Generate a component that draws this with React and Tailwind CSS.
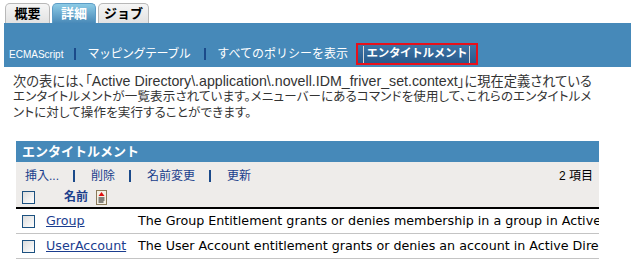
import React from 'react';

const FONT = '"Liberation Sans", "Noto Sans CJK JP", sans-serif';
const WIDE = '"DejaVu Sans", "Noto Sans CJK JP", sans-serif';

const Tab = ({ label, active, w }) => (
  <div
    className={
      active
        ? 'h-[20px] flex items-center justify-center rounded-t-[5px] border border-b-0 border-[#5c9cc6] bg-gradient-to-b from-[#8ccbe6] to-[#4a8ab8] text-white font-bold text-[13px]'
        : 'h-[20px] flex items-center justify-center rounded-t-[5px] border border-b-0 border-[#b8b8b8] bg-gradient-to-b from-[#f6f6f6] to-[#e2e2e2] text-black font-bold text-[13px]'
    }
    style={{ width: w }}
  >
    {label}
  </div>
);

const Sep = () => <span className="inline-block w-[2px] h-[12px] bg-[#1b4a8a]" />;

const Checkbox = () => (
  <span className="inline-block shrink-0 w-[13px] h-[13px] border border-[#1c5180] bg-gradient-to-br from-[#dcdcdc] to-white" />
);

const SortIcon = () => (
  <svg width="11" height="15" viewBox="0 0 11 15">
    <rect x="0.5" y="0.5" width="10" height="14" fill="#f4f0e4" stroke="#8a7a5a" />
    <path d="M5.5 2 L8.5 6 L2.5 6 Z" fill="#e01010" />
    <path d="M2.5 8h6M2.5 10h6M2.5 12h5" stroke="#111" strokeWidth="1" />
  </svg>
);

const rows = [
  { name: 'Group', desc: 'The Group Entitlement grants or denies membership in a group in Active Directory.' },
  { name: 'UserAccount', desc: 'The User Account entitlement grants or denies an account in Active Directory.' },
];

export default function App() {
  return (
    <div className="w-[631px] h-[266px] overflow-hidden bg-white" style={{ fontFamily: FONT }}>
      {/* tabs */}
      <div className="flex items-end gap-[2px] pl-[5px] pt-[3px]">
        <Tab label="概要" w={45} />
        <Tab label="詳細" active w={44} />
        <Tab label="ジョブ" w={51} />
      </div>

      {/* sub navigation */}
      <div className="ml-[4px] h-[44px] bg-[#4689b9] flex items-center pt-[18px] pl-[5px] text-white">
        <span className="text-[10px]">ECMAScript</span>
        <span className="mx-[11px] flex items-center"><Sep /></span>
        <span className="text-[12px] tracking-[-0.5px]">マッピングテーブル</span>
        <span className="ml-[14px] mr-[11px] flex items-center"><Sep /></span>
        <span className="text-[12px]">すべてのポリシーを表示</span>
        <span className="ml-[8px] flex items-center"><Sep /></span>
        <div className="shrink-0 ml-[-2px] w-[122px] h-[22px] border-2 border-[#e8101a] bg-gradient-to-b from-[#3f75a6] to-[#285a8c] flex items-center justify-center">
          <span className="h-[17px] w-[107px] border-x border-[#d8d8d8] flex items-center justify-center text-[11.5px] font-bold tracking-[-0.3px]">
            エンタイトルメント
          </span>
        </div>
      </div>

      {/* description */}
      <div className="pl-[13px] pt-[6px] text-[#333] whitespace-nowrap [font-feature-settings:'palt']">
        <div className="h-[16px] leading-[16px] text-[13.3px]">
          次の表には、「<span className="text-[14.2px]">Active Directory\.application\.novell.IDM_friver_set.context</span>」に現在定義されている
        </div>
        <div className="h-[16px] leading-[16px] text-[12.5px] tracking-[0.15px]">
          エンタイトルメントが一覧表示されています。メニューバーにあるコマンドを使用して、これらのエンタイトルメ
        </div>
        <div className="h-[16px] leading-[16px] text-[12.5px] tracking-[0.15px]">
          ントに対して操作を実行することができます。
        </div>
      </div>

      {/* table */}
      <div className="ml-[16px] mt-[20px] w-[583px]">
        <div className="h-[21px] bg-[#4689b9] text-white text-[13px] font-bold flex items-center pl-[6px]">
          エンタイトルメント
        </div>
        <div className="bg-[#eeecea] h-[47px] border-b-2 border-black">
          <div className="flex items-center h-[27px] pl-[9px] pr-[6px] text-[12px] text-[#1a3e8c]">
            <span>挿入...</span>
            <span className="ml-[14px] mr-[16px] flex items-center"><Sep /></span>
            <span>削除</span>
            <span className="ml-[14px] mr-[16px] flex items-center"><Sep /></span>
            <span>名前変更</span>
            <span className="ml-[14px] mr-[16px] flex items-center"><Sep /></span>
            <span>更新</span>
            <span className="ml-auto text-black">2 項目</span>
          </div>
          <div className="flex items-center h-[16px] pl-[6px]">
            <Checkbox />
            <span className="ml-[29px] text-[12px] font-bold text-[#1a3e8c]">名前</span>
            <span className="ml-[8px] flex"><SortIcon /></span>
          </div>
        </div>
        {rows.map((r) => (
          <div
            key={r.name}
            className="h-[25px] border-b border-[#c4c4c4] flex items-center pl-[6px] text-[12.7px] whitespace-nowrap overflow-hidden"
            style={{ fontFamily: WIDE }}
          >
            <Checkbox />
            <a href="#" className="shrink-0 ml-[11px] w-[92px] text-[#1b3d8f] underline">{r.name}</a>
            <span className="text-black">{r.desc}</span>
          </div>
        ))}
      </div>
    </div>
  );
}
